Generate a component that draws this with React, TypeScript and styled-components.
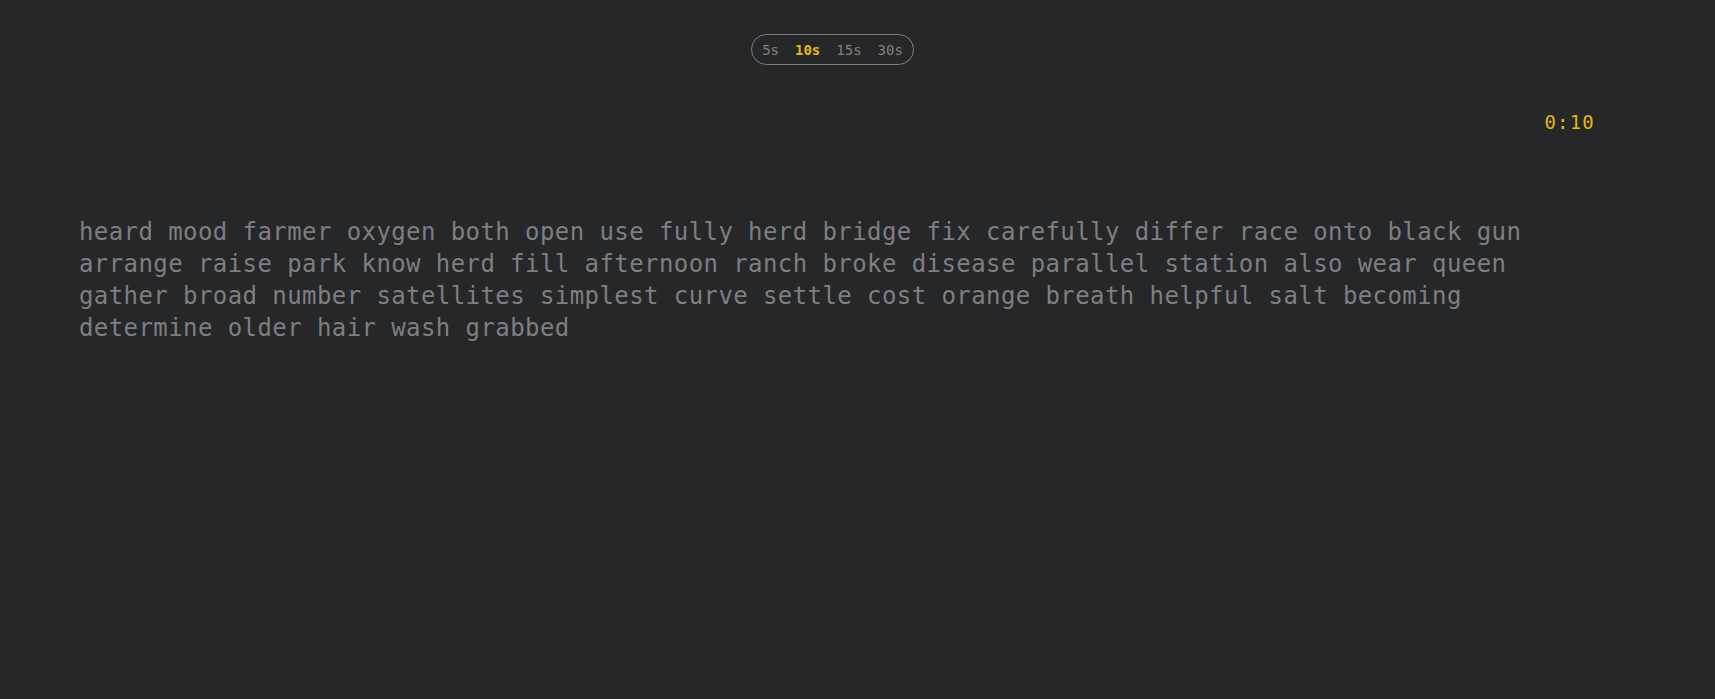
import React from "react";
import styled, { createGlobalStyle } from "styled-components";

const GlobalStyle = createGlobalStyle`
  html, body {
    margin: 0;
    padding: 0;
    background: #262729;
  }
  body {
    font-family: "DejaVu Sans Mono", "Liberation Mono", monospace;
  }
`;

const Page = styled.div`
  min-height: 699px;
  background: #262729;
  padding-top: 34px;
  box-sizing: border-box;
`;

const Container = styled.div`
  margin-left: 79px;
  width: 1516px;
  display: flex;
  flex-direction: column;
`;

const TopBar = styled.div`
  display: flex;
  justify-content: center;
  padding-right: 9px;
`;

const Pill = styled.div`
  display: inline-flex;
  align-items: center;
  gap: 16px;
  height: 31px;
  box-sizing: border-box;
  padding: 0 10px;
  border: 1px solid #7d7e80;
  border-radius: 16px;
`;

const Option = styled.button<{ $active?: boolean }>`
  background: none;
  border: none;
  padding: 0;
  margin: 0;
  font-family: "DejaVu Sans Mono", monospace;
  font-size: 14px;
  line-height: 18px;
  font-weight: ${(p) => (p.$active ? 700 : 400)};
  color: ${(p) => (p.$active ? "#e2b714" : "#7f8082")};
  cursor: pointer;
`;

const TimerRow = styled.div`
  display: flex;
  justify-content: flex-end;
  margin-top: 45px;
`;

const Timer = styled.div`
  font-family: "DejaVu Sans Mono", monospace;
  font-size: 19px;
  line-height: 24px;
  letter-spacing: 1.2px;
  color: #e2b714;
`;

const Words = styled.div`
  margin-top: 81.5px;
  font-family: "DejaVu Sans Mono", monospace;
  font-size: 24px;
  line-height: 32.1px;
  letter-spacing: 0.42px;
  color: #7e7f81;
  word-wrap: break-word;
`;

const words =
  "heard mood farmer oxygen both open use fully herd bridge fix carefully differ race onto black gun arrange raise park know herd fill afternoon ranch broke disease parallel station also wear queen gather broad number satellites simplest curve settle cost orange breath helpful salt becoming determine older hair wash grabbed";

const options = ["5s", "10s", "15s", "30s"];

export default function App() {
  return (
    <>
      <GlobalStyle />
      <Page>
        <Container>
          <TopBar>
            <Pill>
              {options.map((o) => (
                <Option key={o} $active={o === "10s"}>
                  {o}
                </Option>
              ))}
            </Pill>
          </TopBar>
          <TimerRow>
            <Timer>0:10</Timer>
          </TimerRow>
          <Words>{words}</Words>
        </Container>
      </Page>
    </>
  );
}
